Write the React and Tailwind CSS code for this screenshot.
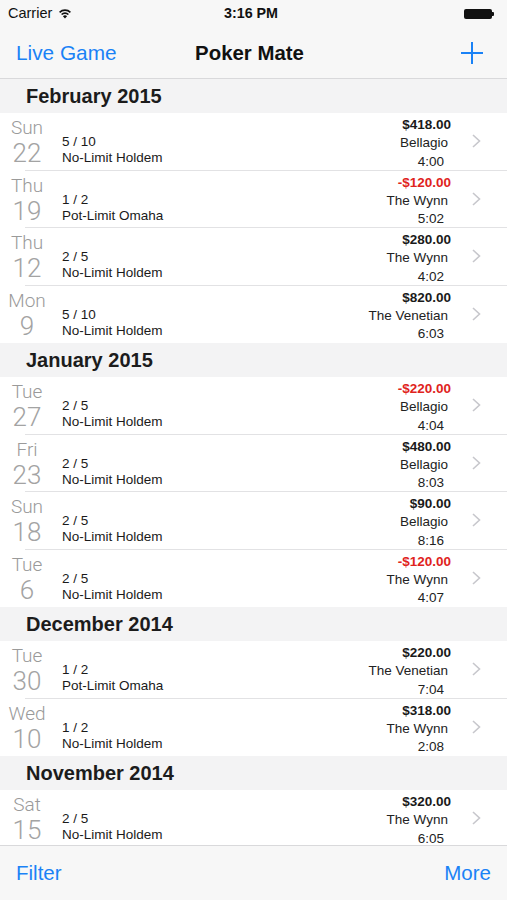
import React from "react";

const sections = [
  {
    title: "February 2015",
    rows: [
      { day: "Sun", date: "22", stakes: "5 / 10", game: "No-Limit Holdem", amount: "$418.00", place: "Bellagio", time: "4:00" },
      { day: "Thu", date: "19", stakes: "1 / 2", game: "Pot-Limit Omaha", amount: "-$120.00", place: "The Wynn", time: "5:02", loss: true },
      { day: "Thu", date: "12", stakes: "2 / 5", game: "No-Limit Holdem", amount: "$280.00", place: "The Wynn", time: "4:02" },
      { day: "Mon", date: "9", stakes: "5 / 10", game: "No-Limit Holdem", amount: "$820.00", place: "The Venetian", time: "6:03" },
    ],
  },
  {
    title: "January 2015",
    rows: [
      { day: "Tue", date: "27", stakes: "2 / 5", game: "No-Limit Holdem", amount: "-$220.00", place: "Bellagio", time: "4:04", loss: true },
      { day: "Fri", date: "23", stakes: "2 / 5", game: "No-Limit Holdem", amount: "$480.00", place: "Bellagio", time: "8:03" },
      { day: "Sun", date: "18", stakes: "2 / 5", game: "No-Limit Holdem", amount: "$90.00", place: "Bellagio", time: "8:16" },
      { day: "Tue", date: "6", stakes: "2 / 5", game: "No-Limit Holdem", amount: "-$120.00", place: "The Wynn", time: "4:07", loss: true },
    ],
  },
  {
    title: "December 2014",
    rows: [
      { day: "Tue", date: "30", stakes: "1 / 2", game: "Pot-Limit Omaha", amount: "$220.00", place: "The Venetian", time: "7:04" },
      { day: "Wed", date: "10", stakes: "1 / 2", game: "No-Limit Holdem", amount: "$318.00", place: "The Wynn", time: "2:08" },
    ],
  },
  {
    title: "November 2014",
    rows: [
      { day: "Sat", date: "15", stakes: "2 / 5", game: "No-Limit Holdem", amount: "$320.00", place: "The Wynn", time: "6:05" },
    ],
  },
];

function Wifi() {
  return (
    <svg width="12" height="10" viewBox="0 0 12 10" className="ml-[7px]">
      <path d="M0.6 3.4 A7.6 7.6 0 0 1 11.4 3.4" stroke="#111" strokeWidth="1.6" fill="none" />
      <path d="M2.6 5.5 A4.8 4.8 0 0 1 9.4 5.5" stroke="#111" strokeWidth="1.6" fill="none" />
      <path d="M6 9.4 L3.9 7.3 A3 3 0 0 1 8.1 7.3 Z" fill="#111" />
    </svg>
  );
}

function Battery() {
  return (
    <div className="flex items-center">
      <div className="w-[28px] h-[10px] rounded-[2px] bg-[#111]" />
      <div className="w-[2px] h-[4px] bg-[#111] rounded-r-[1px]" />
    </div>
  );
}

function Chevron() {
  return (
    <svg width="9" height="14" viewBox="0 0 9 14" className="ml-[21px] mr-[26px] shrink-0">
      <path d="M1 1 L7.5 7 L1 13" stroke="#c7c7cc" strokeWidth="1.6" fill="none" />
    </svg>
  );
}

function Row({ row, last }) {
  return (
    <div className="bg-white">
      <div className="h-[56.5px] flex">
        {/* day */}
        <div className="w-[54px] flex flex-col items-center pt-[5px] font-['Roboto','Liberation_Sans',sans-serif] font-light">
          <span className="text-[19px] leading-[20px] text-[#9a9a9a]">{row.day}</span>
          <span className="mt-[2px] text-[26px] leading-[26px] text-[#a3a3a3]">{row.date}</span>
        </div>
        {/* game */}
        <div className="ml-[8px] flex-1 flex flex-col pt-[21px] text-[13.5px] leading-[16px] text-[#1a1a1a]">
          <span>{row.stakes}</span>
          <span>{row.game}</span>
        </div>
        {/* result */}
        <div className="flex flex-col items-end pt-[3px] text-[13.5px] leading-[18.4px]">
          <span className={`font-bold ${row.loss ? "text-[#e0231d]" : "text-[#1a1a1a]"}`}>{row.amount}</span>
          <span className="pr-[3px] text-[#222]">{row.place}</span>
          <span className="pr-[7px] text-[#222]">{row.time}</span>
        </div>
        <div className="flex items-center">
          <Chevron />
        </div>
      </div>
      {last ? <div className="h-px" /> : <div className="ml-[25px] h-px bg-[#e2e2e4]" />}
    </div>
  );
}

export default function App() {
  return (
    <div className="w-full h-[900px] flex flex-col bg-white overflow-hidden font-['Liberation_Sans',Arial,sans-serif]">
      {/* status bar */}
      <div className="h-[28px] bg-[#f7f7f7] flex items-center px-[8px] text-[14.5px] text-[#111]">
        <div className="flex-1 flex items-center">
          <span>Carrier</span>
          <Wifi />
        </div>
        <span className="font-bold text-[14.3px]">3:16 PM</span>
        <div className="flex-1 flex justify-end pr-[5px]">
          <Battery />
        </div>
      </div>

      {/* nav bar */}
      <div className="h-[51px] bg-[#f7f7f7] border-b border-[#d9d9db] flex items-center px-[16px]">
        <div className="flex-1 text-[20.8px] text-[#1a82f6]">Live Game</div>
        <div className="text-[20.4px] font-bold text-[#111]">Poker Mate</div>
        <div className="flex-1 flex justify-end pr-[8px]">
          <svg width="22" height="22" viewBox="0 0 22 22">
            <path d="M11 0 V22 M0 11 H22" stroke="#1a82f6" strokeWidth="2" />
          </svg>
        </div>
      </div>

      {/* list */}
      <div className="flex-1 overflow-hidden">
        {sections.map((s) => (
          <div key={s.title}>
            <div className="h-[34px] bg-[#f3f3f4] pl-[26px] flex items-center text-[20px] font-bold text-[#1c1c1c]">
              {s.title}
            </div>
            {s.rows.map((r, i) => (
              <Row key={i} row={r} last={i === s.rows.length - 1} />
            ))}
          </div>
        ))}
      </div>

      {/* toolbar */}
      <div className="h-[55px] shrink-0 bg-[#f7f7f7] border-t border-[#d9d9db] flex items-center justify-between px-[16px] text-[20.5px] text-[#1a82f6]">
        <span>Filter</span>
        <span>More</span>
      </div>
    </div>
  );
}
